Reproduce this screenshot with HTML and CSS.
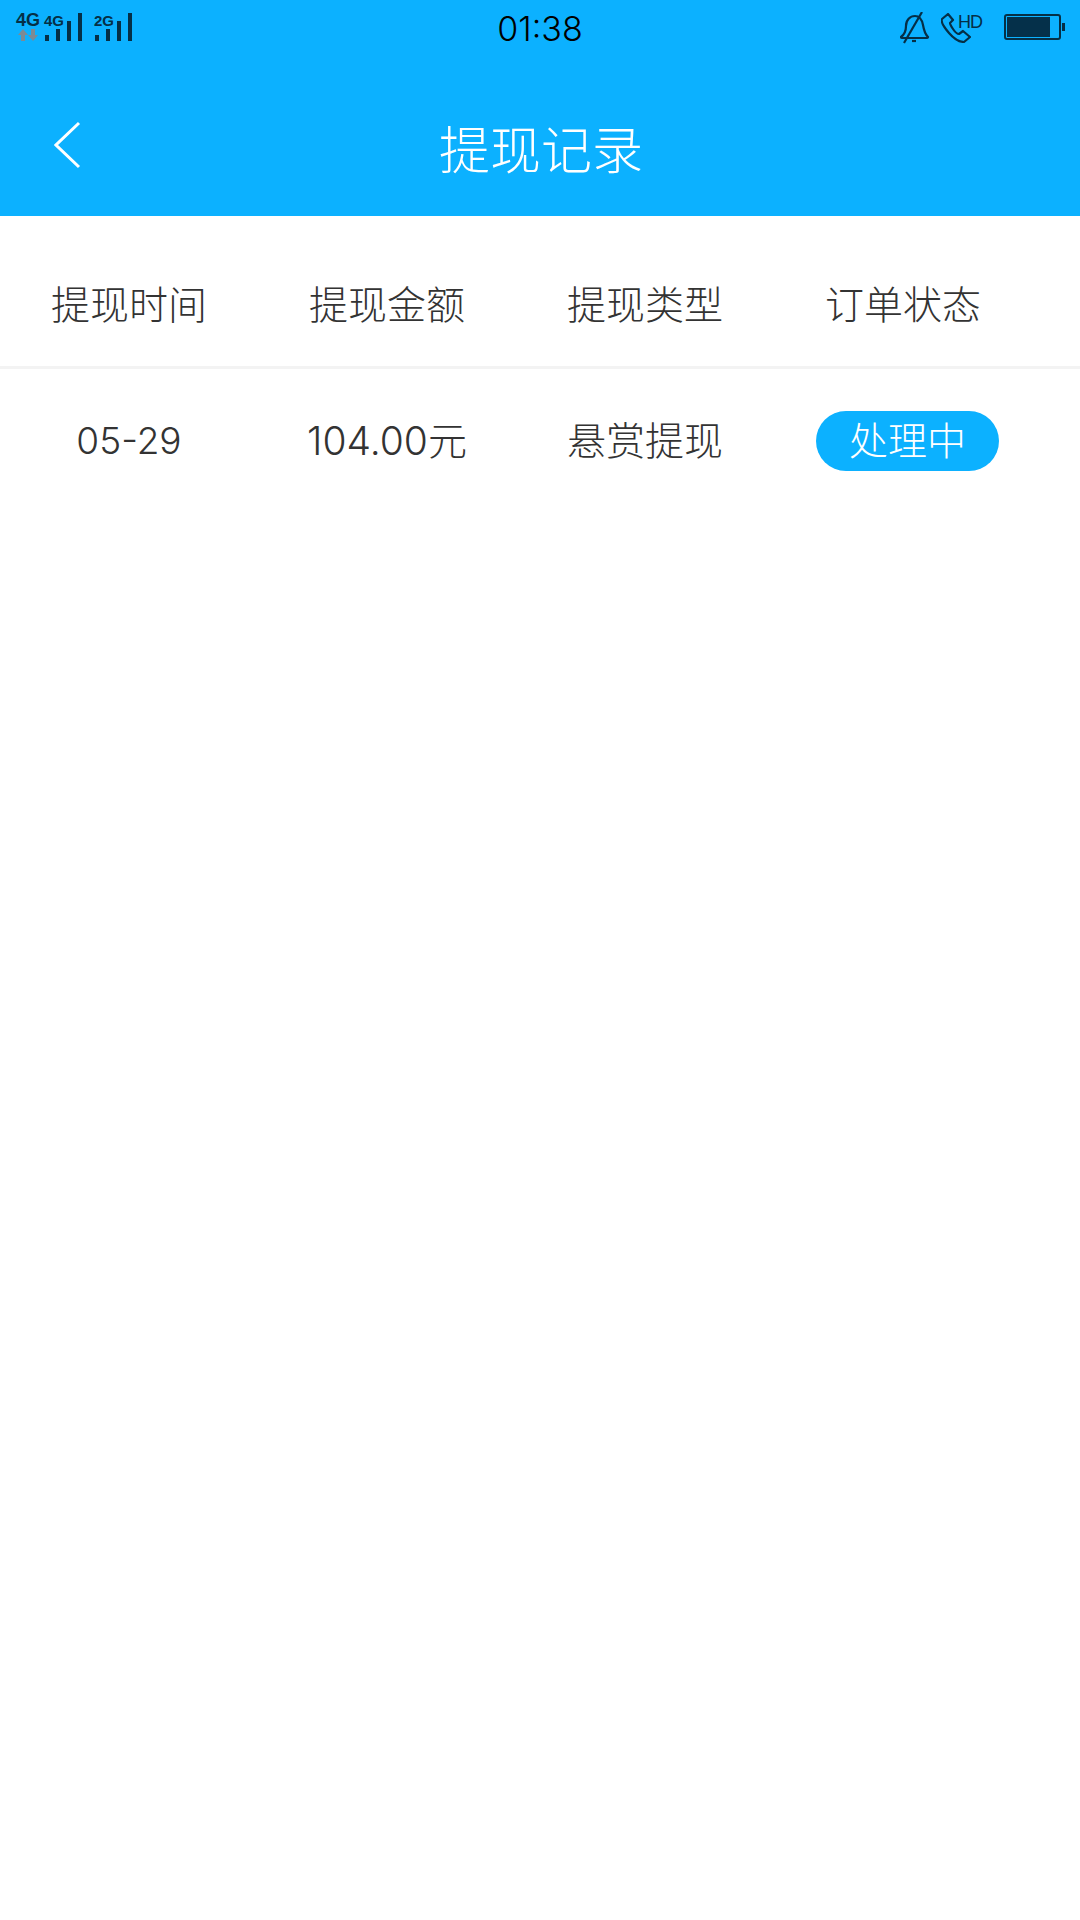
FILE: index.html
```html
<!DOCTYPE html>
<html lang="zh-CN">
<head>
  <meta charset="UTF-8">
  <title>提现记录</title>
  <link rel="stylesheet" href="styles.css">
</head>
<body>

<header class="top">
  <div class="status-bar">
    <div class="status-left">
      <div class="net-main">
        <span class="net-label">4G</span>
        <svg class="net-arrows" width="20" height="12" viewBox="0 0 20 12">
          <path d="M5 0 10 6H7v6H3V6H0zM15 12 10 6h3V0h4v6h3z" fill="#7d8a94"/>
        </svg>
      </div>
      <div class="signal">
        <span class="signal-label">4G</span>
        <svg width="37" height="28" viewBox="0 0 37 28">
          <path d="M0 22h4v6H0zM11 16h4v12h-4zM22 8h4v20h-4zM33 0h4v28h-4z" fill="#052f46"/>
        </svg>
      </div>
      <div class="signal signal-second">
        <span class="signal-label">2G</span>
        <svg width="37" height="28" viewBox="0 0 37 28">
          <path d="M0 22h4v6H0zM11 16h4v12h-4zM22 8h4v20h-4zM33 0h4v28h-4z" fill="#052f46"/>
        </svg>
      </div>
    </div>
    <div class="clock">01:38</div>
    <div class="status-right">
      <svg class="bell" width="30" height="32" viewBox="0 0 30 32" fill="none" stroke="#052f46" stroke-width="2.2">
        <path d="M1 25c4-3 5-6 5-11 0-6 4-10 9-10s7 4 8 9c1 6 2 9 5 12 0 1-1 1-2 1H2c-1 0-1-1-1-1z"/>
        <path d="M22 0 4 31"/>
        <path d="M12 29h4"/>
      </svg>
      <div class="call">
        <svg width="30" height="30" viewBox="0 0 30 30" fill="none" stroke="#052f46" stroke-width="2.2" stroke-linejoin="round">
          <path d="M7 1 1 6c-1 2 1 7 7 14s12 9 15 9l6-5-7-6-4 3c-2 0-4-2-6-5s-3-5-3-6l3-3z"/>
        </svg>
        <span class="hd">HD</span>
      </div>
      <div class="battery">
        <div class="battery-body"><div class="battery-fill"></div></div>
        <div class="battery-cap"></div>
      </div>
    </div>
  </div>
  <div class="nav">
    <svg class="back" width="28" height="48" viewBox="0 0 28 48" fill="none" stroke="#fff" stroke-width="3">
      <path d="M25 2 2 24l23 22"/>
    </svg>
    <h1 class="title">提现记录</h1>
  </div>
</header>

<div class="table-head">
  <div class="cell">提现时间</div>
  <div class="cell">提现金额</div>
  <div class="cell">提现类型</div>
  <div class="cell">订单状态</div>
</div>

<div class="table-row">
  <div class="cell date">05-29</div>
  <div class="cell">104.00元</div>
  <div class="cell">悬赏提现</div>
  <div class="cell"><span class="pill">处理中</span></div>
</div>

</body>
</html>
```

FILE: styles.css
```css
* {
  margin: 0;
  padding: 0;
  box-sizing: border-box;
}

body {
  width: 1080px;
  height: 1920px;
  background-color: #fff;
  color: #333;
  font-family: 'Inter', 'Noto Sans CJK SC', sans-serif;
  font-weight: 300;
  overflow: hidden;
}

.top {
  height: 216px;
  background-color: #0cb1ff;
  display: flex;
  flex-direction: column;
}

.status-bar {
  height: 56px;
  display: flex;
  align-items: flex-start;
  position: relative;
}

.status-left {
  display: flex;
  padding: 13px 0 0 16px;
  width: 360px;
}

.net-main {
  width: 24px;
  display: flex;
  flex-direction: column;
  align-items: center;
}

.net-label {
  font-size: 18px;
  line-height: 15px;
  font-weight: 700;
  color: #052f46;
  font-family: 'Liberation Sans', sans-serif;
}

.net-arrows {
  margin-top: 1px;
}

.signal {
  width: 37px;
  height: 28px;
  margin-left: 5px;
  position: relative;
}

.signal svg {
  position: absolute;
  left: 0;
  bottom: 0;
}

.signal-label {
  position: absolute;
  left: -1px;
  top: 0;
  font-size: 15px;
  line-height: 15px;
  font-weight: 700;
  color: #052f46;
  font-family: 'Liberation Sans', sans-serif;
}

.signal-second {
  margin-left: 13px;
}

.clock {
  width: 360px;
  text-align: center;
  font-size: 34px;
  line-height: 58px;
  font-weight: 300;
  color: #000;
}

.status-right {
  flex: 1;
  display: flex;
  padding: 12px 0 0 180px;
}

.bell {
  flex-shrink: 0;
}

.call {
  display: flex;
  margin-left: 11px;
  position: relative;
  width: 44px;
}

.call svg {
  margin-top: 1px;
  flex-shrink: 0;
}

.hd {
  position: absolute;
  left: 17px;
  top: 0;
  font-size: 18px;
  line-height: 20px;
  letter-spacing: -1px;
  font-weight: 400;
  color: #052f46;
  font-family: 'Liberation Sans', sans-serif;
}

.battery {
  display: flex;
  align-items: center;
  margin-left: 19px;
  margin-top: 2px;
  height: 26px;
}

.battery-body {
  width: 57px;
  height: 26px;
  border: 2px solid #052f46;
  border-radius: 3px;
  padding: 1px;
}

.battery-fill {
  width: 43px;
  height: 100%;
  background-color: #05304a;
}

.battery-cap {
  width: 3px;
  height: 8px;
  margin-left: 1px;
  background-color: #052f46;
}

.nav {
  flex: 1;
  position: relative;
  display: flex;
  align-items: center;
  justify-content: center;
}

.back {
  position: absolute;
  left: 54px;
  top: 65px;
}

.title {
  font-size: 51px;
  font-weight: 300;
  line-height: 60px;
  color: #fff;
  margin-left: 2px;
  margin-top: 29px;
}

.table-head,
.table-row {
  display: flex;
  align-items: center;
  font-size: 39px;
  line-height: 50px;
}

.table-head {
  height: 153px;
  padding-top: 28px;
  border-bottom: 3px solid #f3f3f3;
}

.table-row {
  height: 150px;
  padding-bottom: 6px;
}

.cell {
  width: 258px;
  text-align: center;
}

.date {
  font-size: 37px;
}

.pill {
  display: block;
  width: 183px;
  height: 60px;
  line-height: 60px;
  margin-left: 42px;
  border-radius: 30px;
  background-color: #0cb1ff;
  color: #fff;
}
```
